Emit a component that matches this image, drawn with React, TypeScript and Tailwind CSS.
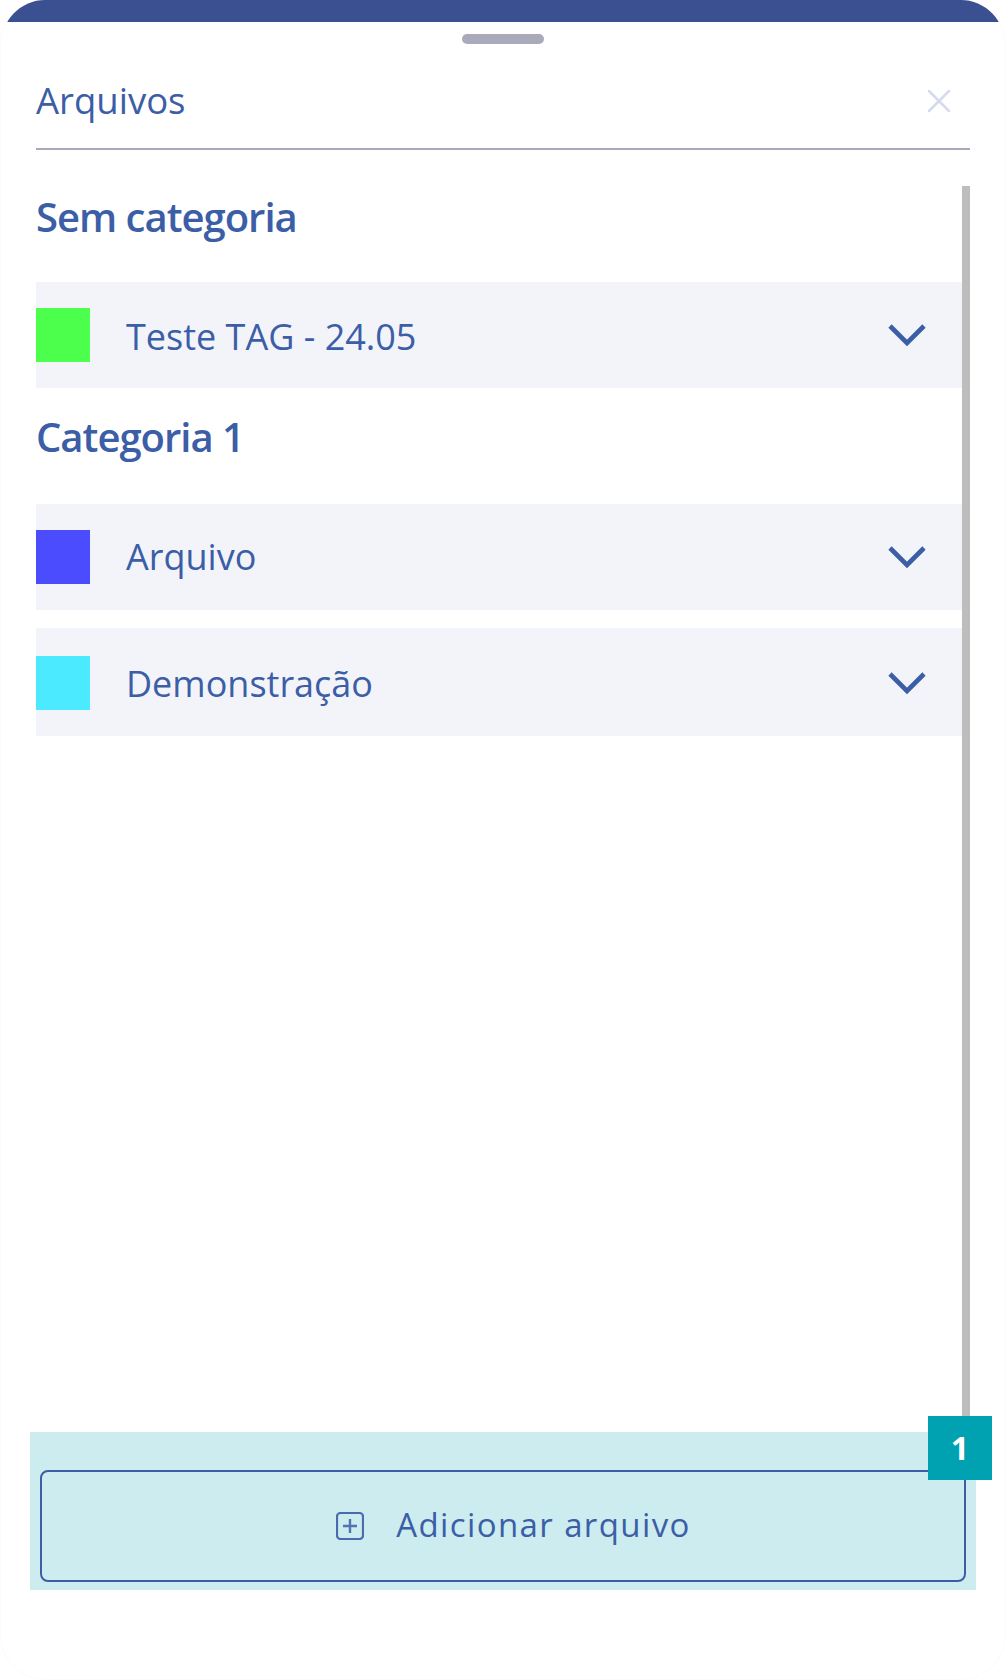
import { X } from "lucide-react";

const font = { fontFamily: '"Open Sans", sans-serif' };

const FileRow = ({ color, label, className, textClass = "" }: { color: string; label: string; className: string; textClass?: string }) => (
  <div className={`flex items-center bg-[#f3f4f9] ${className}`}>
    <div className={`w-[54px] h-[54px] ${color}`}></div>
    <span className={`ml-9 text-[36px] leading-none text-[#3b5ea6] ${textClass}`}>{label}</span>
    <svg width="38" height="24" viewBox="0 0 38 24" fill="none" className="ml-auto mr-[36px] text-[#3b5ea6]">
      <path d="M2 3 L19 20 L36 3" stroke="currentColor" strokeWidth="4.6" />
    </svg>
  </div>
);

export default function App() {
  return (
    <div className="w-[1006px] h-[1680px] bg-white overflow-hidden" style={font}>
      <div className="relative h-full rounded-[45px] border border-t-0 border-[#fafbfe] overflow-hidden flex flex-col px-[35px]">
        <div className="-mx-[35px] h-[22px] bg-[#3b5091] shrink-0"></div>

        {/* drag handle */}
        <div className="mt-[12px] mx-auto w-[82px] h-[10px] rounded-full bg-[#a9abbb] shrink-0"></div>

        {/* header */}
        <div className="flex items-center h-[106px] border-b-2 border-[#aaa9bb] shrink-0">
          <h1 className="text-[36.5px] leading-none font-normal text-[#3b5ea6] mt-[8px]">Arquivos</h1>
          <X size={40} strokeWidth={1.5} className="ml-auto mr-[11px] mt-[10px] text-[#d3dbec]" />
        </div>

        {/* list + scrollbar */}
        <div className="flex mt-[36px] h-[1246px] shrink-0">
          <div className="flex-1">
            <h2 className="h-[60px] text-[40px] leading-[62px] font-semibold tracking-[-1px] text-[#3b5ea6]">Sem categoria</h2>
            <FileRow color="bg-[#4cff4c]" label="Teste TAG - 24.05" textClass="mt-[3px]" className="mt-[36px] h-[106px]" />
            <h2 className="mt-[20px] h-[60px] text-[40px] leading-[58px] font-semibold tracking-[-1px] text-[#3b5ea6]">Categoria 1</h2>
            <FileRow color="bg-[#4c4cff]" label="Arquivo" className="mt-[36px] h-[106px]" />
            <FileRow color="bg-[#4ceaff]" label="Demonstração" textClass="mt-[2px]" className="mt-[18px] h-[108px] pt-px" />
          </div>
          <div className="w-2 bg-[#bdbdbd]"></div>
        </div>

        {/* highlighted add button */}
        <div className="relative -mx-[6px] h-[158px] pt-[38px] px-[10px] bg-[#cdecef] shrink-0">
          <button className="w-full h-[112px] pl-5 flex items-center justify-center border-2 border-[#3b5ea6] rounded-lg">
            <svg width="28" height="28" viewBox="0 0 28 28" fill="none" className="ml-px mr-[32px] text-[#3b5ea6]">
              <rect x="1" y="1" width="26" height="26" rx="3.5" stroke="currentColor" strokeWidth="2.2" opacity="0.9" />
              <path d="M14 7v14M7 14h14" stroke="currentColor" strokeWidth="2.4" opacity="0.85" />
            </svg>
            <span className="text-[33px] leading-none tracking-[1.4px] text-[#3b5ea6] -mt-[4px]">Adicionar arquivo</span>
          </button>
          <div className="absolute top-[-16px] right-[-16px] w-16 h-16 flex items-center justify-center bg-[#00a1b0] text-white text-[32px] font-bold">
            1
          </div>
        </div>
      </div>
    </div>
  );
}
